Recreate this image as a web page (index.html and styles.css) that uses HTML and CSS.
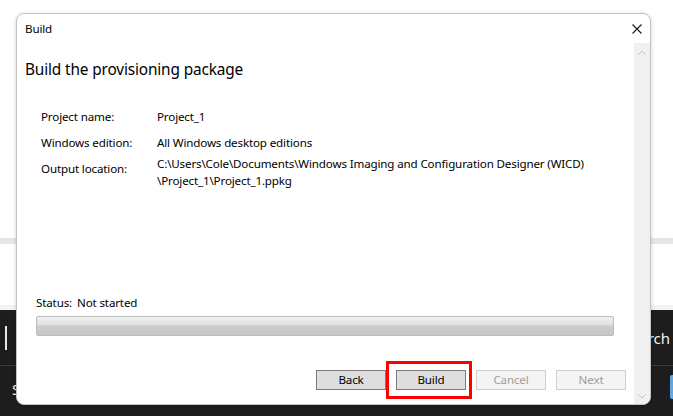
FILE: index.html
```html
<!DOCTYPE html>
<html>
<head>
<meta charset="utf-8">
<link rel="stylesheet" href="styles.css">
</head>
<body>
<div class="desktop">
  <div class="app-top"></div>
  <div class="app-strip"></div>
  <div class="app-mid"></div>
  <div class="app-edge"></div>
  <div class="taskbar">
    <div class="tb-row1">
      <div class="tb-bar"></div>
      <div class="tb-search">Search</div>
    </div>
    <div class="tb-sep"></div>
    <div class="tb-row2">
      <div class="tb-s">Start</div>
      <div class="tb-blue"></div>
    </div>
  </div>
</div>

<div class="dialog">
  <div class="titlebar">
    <span class="title">Build</span>
    <svg class="close" width="10" height="10" viewBox="0 0 10 10"><path d="M0.5 0.5 L9.5 9.5 M9.5 0.5 L0.5 9.5" stroke="#1a1a1a" stroke-width="1.1" fill="none"/></svg>
  </div>
  <div class="dlg-body">
    <div class="content">
      <h1 class="heading">Build the provisioning package</h1>
      <div class="details">
        <div class="row"><div class="label">Project name:</div><div class="value">Project_1</div></div>
        <div class="row"><div class="label">Windows edition:</div><div class="value">All Windows desktop editions</div></div>
        <div class="row row-multi"><div class="label">Output location:</div><div class="value">C:\Users\Cole\Documents\Windows Imaging and Configuration Designer (WICD)<br>\Project_1\Project_1.ppkg</div></div>
      </div>
      <div class="spacer"></div>
      <div class="status"><span>Status:</span><span>Not started</span></div>
      <div class="progress"></div>
      <div class="buttons">
        <button class="btn">Back</button>
        <button class="btn">Build</button>
        <button class="btn disabled">Cancel</button>
        <button class="btn disabled">Next</button>
      </div>
    </div>
    <div class="scrollbar">
      <svg width="8" height="5" viewBox="0 0 8 5"><path d="M0.5 4.5 L4 1 L7.5 4.5" stroke="#c2c2c2" stroke-width="1" fill="none"/></svg>
      <svg width="8" height="5" viewBox="0 0 8 5"><path d="M0.5 0.5 L4 4 L7.5 0.5" stroke="#c2c2c2" stroke-width="1" fill="none"/></svg>
    </div>
  </div>
</div>

<div class="highlight"></div>
</body>
</html>
```

FILE: styles.css
```css
html, body {
  margin: 0;
  padding: 0;
}
body {
  width: 673px;
  height: 416px;
  overflow: hidden;
  position: relative;
  font-family: "Noto Sans", "Open Sans", sans-serif;
  background: #fff;
}

/* background application */
.desktop {
  display: flex;
  flex-direction: column;
  height: 416px;
}
.app-top { height: 238px; background: #ffffff; }
.app-strip { height: 6px; background: #e6e6e6; }
.app-mid { height: 61px; background: #ffffff; }
.app-edge { height: 5px; background: #f3f3f3; }
.taskbar {
  flex: 1;
  background: #1d1d1d;
  display: flex;
  flex-direction: column;
}
.tb-row1 {
  height: 55px;
  display: flex;
  align-items: center;
  justify-content: space-between;
}
.tb-bar {
  width: 2px;
  height: 24px;
  margin-left: 5px;
  background: #e8e8e8;
}
.tb-search {
  color: #f2f2f2;
  font-size: 15px;
  margin-right: 3px;
  margin-top: 0;
}
.tb-sep { height: 1px; background: #3b3b3b; }
.tb-row2 {
  flex: 1;
  display: flex;
  align-items: center;
  justify-content: space-between;
}
.tb-s {
  color: #f2f2f2;
  font-size: 15px;
  margin-left: 12px;
  margin-top: -4px;
}
.tb-blue {
  width: 3px;
  height: 24px;
  background: #5ea7e6;
  border-radius: 2px 0 0 2px;
  margin-top: -8px;
}

/* dialog */
.dialog {
  position: absolute;
  left: 16px;
  top: 13px;
  width: 635px;
  height: 392px;
  box-sizing: border-box;
  border: 1px solid #c4c4c4;
  border-radius: 8px;
  background: #fff;
  overflow: hidden;
  display: flex;
  flex-direction: column;
  box-shadow: 0 1px 4px rgba(0,0,0,0.18);
}
.titlebar {
  height: 29px;
  display: flex;
  align-items: center;
  justify-content: space-between;
  padding-left: 8px;
  padding-right: 8px;
  font-size: 11.6px;
  letter-spacing: -0.15px;
  color: #000;
}
.close { display: block; }
.dlg-body {
  flex: 1;
  display: flex;
  min-height: 0;
}
.content {
  flex: 1;
  display: flex;
  flex-direction: column;
  padding: 0 8px 14px 8px;
  font-size: 11.6px;
  letter-spacing: -0.15px;
  color: #000;
}
.heading {
  margin: 16px 0 0 0;
  font-size: 15.4px;
  letter-spacing: -0.15px;
  font-weight: normal;
  line-height: 22px;
}
.details {
  margin: 22px 0 0 16px;
  display: flex;
  flex-direction: column;
}
.row {
  display: flex;
  align-items: center;
  height: 26px;
}
.row-multi {
  align-items: flex-start;
  height: auto;
}
.label { width: 116px; flex: none; line-height: 17px; }
.row-multi .label { padding-top: 5px; }
.value { line-height: 17px; }
.spacer { flex: 1; }
.status {
  margin-left: 11px;
  line-height: 16px;
  height: 16px;
  display: flex;
  gap: 5px;
}
.progress {
  margin: 5px 12px 0 11px;
  height: 20px;
  box-sizing: border-box;
  border: 1px solid #bcbcbc;
  border-radius: 2px;
  background: linear-gradient(to bottom, #efefef 0%, #e2e2e2 40%, #cdcdcd 50%, #c6c6c6 100%);
}
.buttons {
  margin-top: 34px;
  display: flex;
  justify-content: flex-end;
  gap: 10px;
}
.btn {
  width: 70px;
  height: 20px;
  box-sizing: border-box;
  border: 1px solid #7a7a7a;
  background: #dedede;
  font-family: inherit;
  font-size: 11.6px;
  letter-spacing: -0.15px;
  color: #000;
  padding: 0;
  line-height: 16px;
}
.btn.disabled {
  border-color: #cfcfcf;
  background: #f4f4f4;
  color: #9d9d9d;
}
.scrollbar {
  width: 16px;
  background: #f0f0f0;
  display: flex;
  flex-direction: column;
  justify-content: space-between;
  align-items: center;
  padding: 7px 0 5px 0;
}

.highlight {
  position: absolute;
  left: 386px;
  top: 361px;
  width: 86px;
  height: 38px;
  box-sizing: border-box;
  border: 3px solid #ff0000;
}
```
